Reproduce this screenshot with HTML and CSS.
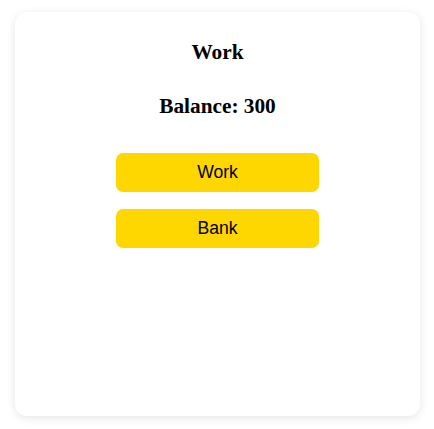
FILE: index.html
```html
<!DOCTYPE html>
<html>
<head>
<meta charset="utf-8">
<link rel="stylesheet" href="styles.css">
</head>
<body>
<div class="page">
  <div class="card">
    <h2 class="title">Work</h2>
    <h2 class="balance">Balance: 300</h2>
    <div class="actions">
      <button class="btn">Work</button>
      <button class="btn">Bank</button>
    </div>
  </div>
</div>
</body>
</html>
```
FILE: styles.css
```css
html, body {
  margin: 0;
  padding: 0;
  background: #fff;
}
.page {
  box-sizing: border-box;
  height: 429px;
  padding: 12px 14px 13px 15px;
  display: flex;
}
.card {
  flex: 1;
  background: #fff;
  border-radius: 12px;
  box-shadow: 0 2px 10px rgba(0, 0, 0, 0.1);
  display: flex;
  flex-direction: column;
  align-items: center;
  padding-top: 28px;
  font-family: "Liberation Serif", "Times New Roman", serif;
  color: #000;
}
.title, .balance {
  margin: 0;
  font-size: 21.3px;
  font-weight: bold;
  line-height: 24px;
}
.balance {
  margin-top: 30px;
}
.actions {
  margin-top: 35px;
  display: flex;
  flex-direction: column;
  gap: 17px;
}
.btn {
  width: 203px;
  height: 39px;
  border: none;
  border-radius: 7px;
  background: #ffd700;
  color: #000;
  font-family: "Liberation Sans", Arial, sans-serif;
  font-size: 17.6px;
  padding: 0;
}
```
